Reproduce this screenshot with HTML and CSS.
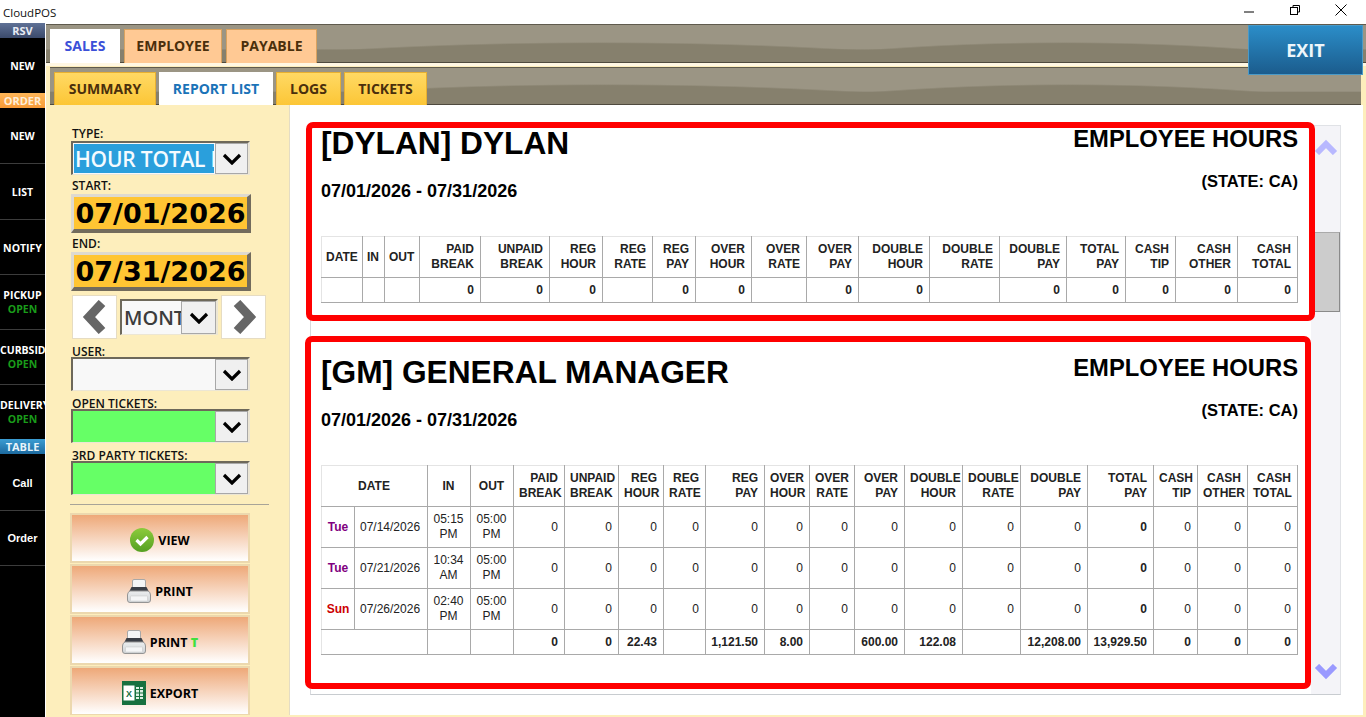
FILE: index.html
```html
<!DOCTYPE html>
<html lang="en">
<head>
<meta charset="UTF-8">
<title>CloudPOS</title>
<link rel="stylesheet" href="styles.css">
</head>
<body>
<svg class="defs" width="0" height="0">
<defs>
<linearGradient id="print-body" x1="0" y1="0" x2="0" y2="1"><stop offset="0" stop-color="#eceeef"/><stop offset="1" stop-color="#cfd3d6"/></linearGradient>
<symbol id="chev-down" viewBox="0 0 20 12"><polyline points="2,2 10,10 18,2" fill="none" stroke="#000" stroke-width="3.2"/></symbol>
<symbol id="printer" viewBox="0 0 24 24">
<path d="M5.5 10 V2 Q5.5 0.5 7 0.5 H17 Q18.5 0.5 18.5 2 V10 Z" fill="#f4f5f6" stroke="#a8a8a8"/>
<path d="M4.5 8 H19.5 L21.5 12 H2.5 Z" fill="#3a3e46"/>
<path d="M3 12 H21 Q23.5 13 23.5 16 V21 Q23.5 23.5 21 23.5 H3 Q0.5 23.5 0.5 21 V16 Q0.5 13 3 12 Z" fill="url(#print-body)" stroke="#949494"/>
<rect x="3.5" y="17" width="17" height="5" rx="0.5" fill="#f5f6f7" stroke="#c4c4c4" stroke-width="0.5"/>
</symbol>
</defs>
</svg>

<div class="titlebar">
<span class="app-name">CloudPOS</span>
<div class="win-btns">
<svg width="16" height="16" viewBox="0 0 16 16"><line x1="3" y1="10" x2="13" y2="10" stroke="#000"/></svg>
<svg width="16" height="16" viewBox="0 0 16 16"><rect x="3.5" y="5.5" width="7" height="7" fill="none" stroke="#000"/><path d="M6 5.5 V3.5 H12.5 V10 H10.5" fill="none" stroke="#000"/></svg>
<svg width="16" height="16" viewBox="0 0 16 16"><path d="M2.5 2.5 L13.5 13.5 M13.5 2.5 L2.5 13.5" stroke="#000"/></svg>
</div>
</div>

<div class="app">
<div class="rail">
<div class="rail-head rsv">RSV</div>
<div class="rail-item">NEW</div>
<div class="rail-head order">ORDER</div>
<div class="rail-item">NEW</div>
<div class="rail-item">LIST</div>
<div class="rail-item">NOTIFY</div>
<div class="rail-item">PICKUP<span class="open">OPEN</span></div>
<div class="rail-item">CURBSIDE<span class="open">OPEN</span></div>
<div class="rail-item">DELIVERY<span class="open">OPEN</span></div>
<div class="rail-head table-head">TABLE</div>
<div class="rail-item sans">Call</div>
<div class="rail-item sans">Order</div>
</div>

<div class="main">
<div class="band top-band">
<div class="tab big active-big">SALES</div>
<div class="tab big">EMPLOYEE</div>
<div class="tab big">PAYABLE</div>
</div>
<button class="exit">EXIT</button>
<div class="band sub-band">
<div class="tab sub">SUMMARY</div>
<div class="tab sub active-sub">REPORT LIST</div>
<div class="tab sub">LOGS</div>
<div class="tab sub">TICKETS</div>
</div>

<div class="body-row">
<div class="filters">
<div class="label">TYPE:</div>
<div class="select">
<div class="select-value selected">HOUR TOTAL BY</div>
<div class="select-btn"><svg width="20" height="12"><use href="#chev-down"/></svg></div>
</div>
<div class="label">START:</div>
<div class="date-box">07/01/2026</div>
<div class="label">END:</div>
<div class="date-box">07/31/2026</div>
<div class="period">
<div class="step"><svg width="26" height="34" viewBox="0 0 26 34"><polyline points="20,3 7,17 20,31" fill="none" stroke="#666" stroke-width="9"/></svg></div>
<div class="select small">
<div class="select-value month">MONTH</div>
<div class="select-btn"><svg width="20" height="12"><use href="#chev-down"/></svg></div>
</div>
<div class="step"><svg width="26" height="34" viewBox="0 0 26 34"><polyline points="6,3 19,17 6,31" fill="none" stroke="#666" stroke-width="9"/></svg></div>
</div>
<div class="label low">USER:</div>
<div class="select">
<div class="select-value"></div>
<div class="select-btn"><svg width="20" height="12"><use href="#chev-down"/></svg></div>
</div>
<div class="label low">OPEN TICKETS:</div>
<div class="select">
<div class="select-value green"></div>
<div class="select-btn"><svg width="20" height="12"><use href="#chev-down"/></svg></div>
</div>
<div class="label low">3RD PARTY TICKETS:</div>
<div class="select">
<div class="select-value green"></div>
<div class="select-btn"><svg width="20" height="12"><use href="#chev-down"/></svg></div>
</div>
<hr class="rule">
<div class="action">
<svg width="24" height="24" viewBox="0 0 24 24"><defs><linearGradient id="ok" x1="0" y1="0" x2="0" y2="1"><stop offset="0" stop-color="#8ccb3c"/><stop offset="1" stop-color="#55a022"/></linearGradient></defs><circle cx="12" cy="12" r="12" fill="url(#ok)"/><polyline points="6.5,12 10.5,16 17.5,9" fill="none" stroke="#fff" stroke-width="3.2"/></svg>
VIEW
</div>
<div class="action"><svg width="24" height="24"><use href="#printer"/></svg>PRINT</div>
<div class="action"><svg width="24" height="24"><use href="#printer"/></svg><span>PRINT <b class="green-t">T</b></span></div>
<div class="action">
<svg width="24" height="24" viewBox="0 0 24 24"><rect width="24" height="24" fill="#17703f"/><rect x="1.5" y="4.5" width="11" height="15" fill="#fff"/><path d="M13.5 5.5 H21.5 V18.5 H13.5 Z M13.5 8.5 H21.5 M13.5 12 H21.5 M13.5 15.5 H21.5 M17.5 5.5 V18.5" fill="#dcefe3" stroke="#17703f"/><text x="7" y="15.5" class="xl">X</text></svg>
EXPORT
</div>
</div>

<div class="content">
<div class="view">
<div class="sheets">
<div class="report">
<div class="report-head">
<div>
<div class="who">[DYLAN] DYLAN</div>
<div class="range">07/01/2026 - 07/31/2026</div>
</div>
<div class="head-right">
<div class="kind">EMPLOYEE HOURS</div>
<div class="state">(STATE: CA)</div>
</div>
</div>
<table class="grid">
<colgroup><col width="41"><col width="22"><col width="35"><col width="61"><col width="69"><col width="53"><col width="50"><col width="43"><col width="56"><col width="55"><col width="52"><col width="71"><col width="70"><col width="67"><col width="59"><col width="50"><col width="62"><col width="60"></colgroup>
<thead><tr><th class="mid">DATE</th><th class="mid">IN</th><th class="mid">OUT</th><th>PAID<br>BREAK</th><th>UNPAID<br>BREAK</th><th>REG<br>HOUR</th><th>REG<br>RATE</th><th>REG<br>PAY</th><th>OVER<br>HOUR</th><th>OVER<br>RATE</th><th>OVER<br>PAY</th><th>DOUBLE<br>HOUR</th><th>DOUBLE<br>RATE</th><th>DOUBLE<br>PAY</th><th>TOTAL<br>PAY</th><th>CASH<br>TIP</th><th>CASH<br>OTHER</th><th>CASH<br>TOTAL</th></tr></thead>
<tbody><tr class="total"><td></td><td></td><td></td><td>0</td><td>0</td><td>0</td><td></td><td>0</td><td>0</td><td></td><td>0</td><td>0</td><td></td><td>0</td><td>0</td><td>0</td><td>0</td><td>0</td></tr></tbody>
</table>
</div>

<div class="report second">
<div class="report-head">
<div>
<div class="who">[GM] GENERAL MANAGER</div>
<div class="range">07/01/2026 - 07/31/2026</div>
</div>
<div class="head-right">
<div class="kind">EMPLOYEE HOURS</div>
<div class="state">(STATE: CA)</div>
</div>
</div>
<table class="grid">
<colgroup><col width="33"><col width="73"><col width="43"><col width="43"><col width="51"><col width="54"><col width="45"><col width="42"><col width="59"><col width="45"><col width="45"><col width="50"><col width="58"><col width="58"><col width="67"><col width="66"><col width="44"><col width="50"><col width="50"></colgroup>
<thead><tr><th class="mid" colspan="2">DATE</th><th class="mid">IN</th><th class="mid">OUT</th><th>PAID<br>BREAK</th><th>UNPAID<br>BREAK</th><th>REG<br>HOUR</th><th>REG<br>RATE</th><th>REG<br>PAY</th><th>OVER<br>HOUR</th><th>OVER<br>RATE</th><th>OVER<br>PAY</th><th>DOUBLE<br>HOUR</th><th>DOUBLE<br>RATE</th><th>DOUBLE<br>PAY</th><th>TOTAL<br>PAY</th><th>CASH<br>TIP</th><th>CASH<br>OTHER</th><th>CASH<br>TOTAL</th></tr></thead>
<tbody>
<tr><td class="day tue">Tue</td><td class="date">07/14/2026</td><td class="mid">05:15 PM</td><td class="mid">05:00 PM</td><td>0</td><td>0</td><td>0</td><td>0</td><td>0</td><td>0</td><td>0</td><td>0</td><td>0</td><td>0</td><td>0</td><td><b>0</b></td><td>0</td><td>0</td><td>0</td></tr>
<tr><td class="day tue">Tue</td><td class="date">07/21/2026</td><td class="mid">10:34 AM</td><td class="mid">05:00 PM</td><td>0</td><td>0</td><td>0</td><td>0</td><td>0</td><td>0</td><td>0</td><td>0</td><td>0</td><td>0</td><td>0</td><td><b>0</b></td><td>0</td><td>0</td><td>0</td></tr>
<tr><td class="day sun">Sun</td><td class="date">07/26/2026</td><td class="mid">02:40 PM</td><td class="mid">05:00 PM</td><td>0</td><td>0</td><td>0</td><td>0</td><td>0</td><td>0</td><td>0</td><td>0</td><td>0</td><td>0</td><td>0</td><td><b>0</b></td><td>0</td><td>0</td><td>0</td></tr>
<tr class="total"><td colspan="2"></td><td></td><td></td><td>0</td><td>0</td><td>22.43</td><td></td><td>1,121.50</td><td>8.00</td><td></td><td>600.00</td><td>122.08</td><td></td><td>12,208.00</td><td>13,929.50</td><td>0</td><td>0</td><td>0</td></tr>
</tbody>
</table>
</div>
</div>

<div class="scrollbar">
<svg class="arrow" width="24" height="16" viewBox="0 0 24 16"><polyline points="3,14 12,5 21,14" fill="none" stroke="#b8b8ff" stroke-width="6"/></svg>
<div class="thumb"></div>
<svg class="arrow down" width="24" height="16" viewBox="0 0 24 16"><polyline points="3,2 12,11 21,2" fill="none" stroke="#9a9aff" stroke-width="6"/></svg>
</div>

<div class="mark mark-a"></div>
<div class="mark mark-b"></div>
</div>
</div>
</div>
</div>
</div>
</body>
</html>
```

FILE: styles.css
```css
html, body {
  margin: 0;
  height: 717px;
  overflow: hidden;
}
body {
  display: flex;
  flex-direction: column;
  background: #fff;
  font-family: "Open Sans", "Liberation Sans", sans-serif;
  color: #000;
}
.defs {
  position: absolute;
}

/* title bar */
.titlebar {
  height: 24px;
  flex: none;
  display: flex;
  align-items: center;
  justify-content: space-between;
  padding: 0 17px 0 3px;
  box-sizing: border-box;
}
.app-name {
  font-size: 11.5px;
  color: #111;
}
.win-btns {
  display: flex;
  gap: 30px;
  margin-top: -4px;
}

.app {
  flex: 1;
  display: flex;
  min-height: 0;
}

/* left rail */
.rail {
  width: 45px;
  flex: none;
  margin-top: -1px;
  background: #000;
  color: #fff;
  font-weight: 700;
  font-size: 10.5px;
  overflow: hidden;
}
.rail::after {
  content: "";
  display: block;
  height: 1px;
  background: #3c3c3c;
}
.rail-head {
  height: 15px;
  line-height: 15px;
  text-align: center;
  font-size: 11px;
}
.rsv {
  background: linear-gradient(#5f7196, #3b4a6b);
  color: #e8ecf4;
}
.order {
  background: linear-gradient(#ffb657, #f79a38);
  color: #ffeed8;
}
.table-head {
  background: linear-gradient(#3b9dd3, #1d6a9f);
  color: #e8f4fb;
}
.rail-item {
  height: 55.2px;
  box-sizing: border-box;
  padding-top: 21px;
  text-align: center;
  white-space: nowrap;
  line-height: 14px;
  overflow: hidden;
}
.rail-item + .rail-item {
  border-top: 1px solid #3c3c3c;
}
.open {
  display: block;
  color: #1a9c1a;
}
.rail-item:has(.open) {
  padding-top: 13px;
}
.rail-item.sans {
  font-family: "Liberation Sans", sans-serif;
  font-size: 11px;
  padding-top: 22px;
}
.rail-item.sans + .sans {
  padding-top: 20px;
}

/* main area */
.main {
  flex: 1;
  position: relative;
  display: flex;
  flex-direction: column;
  min-width: 0;
  margin-left: 1px;
  background: #fdeebc;
}
.band {
  display: flex;
  align-items: flex-end;
  gap: 4px;
  padding-left: 4px;
  box-sizing: border-box;
  border-top: 1px solid #5f5a4d;
  border-bottom: 1px solid #4f4a3e;
  background:
    radial-gradient(ellipse 611px 80px at 554px calc(100% + 60px), #86806d 98%, rgba(134, 128, 109, 0) 100%),
    radial-gradient(ellipse 464px 80px at 1018px calc(100% + 60px), #86806d 98%, rgba(134, 128, 109, 0) 100%),
    linear-gradient(#9b9584 0, #9b9584 64%, #86806d 68%);
}
.top-band {
  height: 39px;
  flex: none;
  box-shadow: 0 3px 0 #fff7e3;
}
.sub-band {
  height: 38px;
  flex: none;
  margin: 4px 5px 0 4px;
  gap: 3px;
}
.tab {
  font-weight: 700;
  font-size: 14px;
  display: flex;
  align-items: center;
  justify-content: center;
  box-sizing: border-box;
  color: #4a2f0c;
  margin-bottom: -1px;
  padding-bottom: 2px;
}
.big {
  height: 34px;
  background: #ffc994;
  border: 1px solid #d9a25f;
  border-bottom: none;
}
.big:nth-child(1) { width: 70px; }
.big:nth-child(2) { width: 98px; }
.big:nth-child(3) { width: 91px; }
.active-big {
  background: #fff;
  border-color: #fff;
  color: #3b50d8;
}
.sub {
  height: 33px;
  background: linear-gradient(#ffd964, #fcc636);
  border: 1px solid #e8b030;
  border-bottom: none;
}
.sub:nth-child(1) { width: 102px; }
.sub:nth-child(2) { width: 114px; }
.sub:nth-child(3) { width: 65px; }
.sub:nth-child(4) { width: 83px; }
.active-sub {
  background: #fff;
  border-color: #fff;
  color: #1a73b8;
}
.exit {
  position: absolute;
  z-index: 1;
  top: 1px;
  left: 1202px;
  width: 115px;
  height: 50px;
  padding: 0;
  border: 1px solid #4a9ac8;
  background: linear-gradient(#2b8dc8, #1b5c8d);
  color: #eef6fb;
  font: 700 18px "Open Sans", sans-serif;
}

/* body */
.body-row {
  flex: 1;
  display: flex;
  min-height: 0;
  margin-bottom: 2px;
}

/* filter column */
.filters {
  width: 244px;
  flex: none;
  box-sizing: border-box;
  padding: 18px 0 0 25px;
  border-right: 1px solid #e4dcc4;
  overflow: hidden;
}
.label {
  height: 15px;
  line-height: 15px;
  margin: 3px 0 0 1px;
  font-size: 12px;
  font-weight: 600;
  color: #111;
  white-space: nowrap;
}
.label.low {
  line-height: 19px;
}
.select {
  width: 179px;
  height: 34px;
  box-sizing: border-box;
  display: flex;
  border-top: 2px solid #6d685a;
  border-left: 2px solid #6d685a;
  border-right: 2px solid #ece6d4;
  border-bottom: 1px solid #ece6d4;
  background: #f8f8f8;
}
.select-value {
  flex: 1;
  min-width: 0;
  overflow: hidden;
  white-space: nowrap;
  font-size: 21px;
  font-weight: 600;
  letter-spacing: -0.2px;
  line-height: 32px;
  padding-left: 3px;
}
.selected {
  background: #2a9fdc;
  color: #f4fbff;
  margin: 1px;
  padding-left: 1px;
  line-height: 30px;
}
.green {
  background: #66ff66;
}
.select-btn {
  width: 33px;
  flex: none;
  box-sizing: border-box;
  display: flex;
  align-items: center;
  justify-content: center;
  background: #f0f0f0;
  border: 1px solid #a8a8a8;
}
.date-box {
  width: 180px;
  height: 39px;
  margin-top: 1px;
  box-sizing: border-box;
  border-top: 3px solid #dedad0;
  border-left: 3px solid #dedad0;
  border-right: 4px solid #726b5c;
  border-bottom: 4px solid #726b5c;
  background: #ffc533;
  font: 700 27px/33px "DejaVu Sans", sans-serif;
  text-align: center;
  white-space: nowrap;
  overflow: hidden;
}
.period {
  display: flex;
  align-items: center;
  gap: 3px;
  height: 44px;
  margin: 4px 0 2px 1px;
}
.step {
  width: 45px;
  height: 44px;
  box-sizing: border-box;
  background: #fff;
  border: 1px solid #e6dcc2;
  display: flex;
  align-items: center;
  justify-content: center;
}
.select.small {
  width: 98px;
  height: 36px;
}
.month {
  color: #3c3c3c;
  font-size: 20px;
  letter-spacing: 0;
  padding-left: 2px;
  line-height: 34px;
}
.select.small .select-btn {
  width: 35px;
}
.rule {
  width: 199px;
  margin: 9px 0 8px -1px;
  border: none;
  border-top: 1px solid #a8a498;
}
.action {
  width: 180px;
  height: 50px;
  margin: 0 0 1px -1px;
  padding-top: 4px;
  box-sizing: border-box;
  display: flex;
  align-items: center;
  justify-content: center;
  gap: 4px;
  border: 2px solid #ecd8ae;
  background: linear-gradient(#eea878, #fff);
  font-size: 12.5px;
  font-weight: 700;
}
.green-t {
  color: #3fe03f;
}
.xl {
  font: 700 9px "Liberation Sans", sans-serif;
  fill: #17703f;
  text-anchor: middle;
}

/* report view */
.content {
  flex: 1;
  min-width: 0;
  background: #fff;
  margin-right: 3px;
  padding: 20px 22px 20px 20px;
}
.view {
  position: relative;
  display: flex;
  height: 570px;
  box-sizing: border-box;
  border: 1px solid #e0e2e6;
  border-bottom-color: #c8ccd0;
  border-top: none;
  border-left-color: #d8dade;
}
.sheets {
  width: 1000px;
  flex: none;
  box-sizing: border-box;
  padding: 0 13px 0 10px;
}
.report-head {
  height: 111px;
  display: flex;
  justify-content: space-between;
  font-family: "Liberation Sans", sans-serif;
  font-weight: 700;
}
.who {
  font-size: 31.7px;
  line-height: 36px;
}
.range {
  font-size: 18px;
  line-height: 22px;
  margin-top: 19px;
}
.head-right {
  text-align: right;
}
.kind {
  font-size: 23.8px;
  line-height: 28px;
}
.state {
  font-size: 16.5px;
  line-height: 20px;
  margin-top: 18px;
}
.second {
  margin-top: 51px;
}
.grid {
  border-collapse: collapse;
  table-layout: fixed;
  width: 976px;
  font: 12px/15px "Liberation Sans", sans-serif;
  color: #222;
}
.grid th,
.grid td {
  border: 1px solid #a9a9a9;
  padding: 0 6px 0 5px;
  text-align: right;
  box-sizing: border-box;
}
.grid th {
  height: 41px;
  font-weight: 700;
  border-top-color: #e4e4e4;
}
.grid td {
  height: 41px;
}
.grid th:first-child,
.grid td:first-child {
  border-left-color: #e4e4e4;
}
.grid .mid {
  text-align: center;
  padding: 0 5px 0 4px;
}
.grid .total td {
  height: 25px;
  font-weight: 700;
}
.grid .day {
  text-align: center;
  font-weight: 700;
  padding: 0;
}
.grid .date {
  text-align: left;
}
.tue {
  color: #800080;
}
.sun {
  color: #cc0000;
}

/* scroller */
.scrollbar {
  flex: 1;
  display: flex;
  flex-direction: column;
  align-items: center;
  background: #f4f4f8;
  border-top: 1px solid #e0e2e6;
}
.arrow {
  margin-top: 13px;
  flex: none;
}
.thumb {
  align-self: stretch;
  height: 80px;
  margin-top: 77px;
  box-sizing: border-box;
  background: #cccccc;
  border: 1px solid #8a8a8a;
  border-top-color: #aaa;
}
.arrow.down {
  margin-top: auto;
  margin-bottom: 14px;
}

/* red highlight boxes drawn over the reports */
.mark {
  position: absolute;
  box-sizing: border-box;
  border: 6px solid #f00;
  border-radius: 7px;
  pointer-events: none;
}
.mark-a {
  left: -5px;
  top: -3px;
  width: 1009px;
  height: 199px;
}
.mark-b {
  left: -6px;
  top: 211px;
  width: 1006px;
  height: 353px;
}
```
